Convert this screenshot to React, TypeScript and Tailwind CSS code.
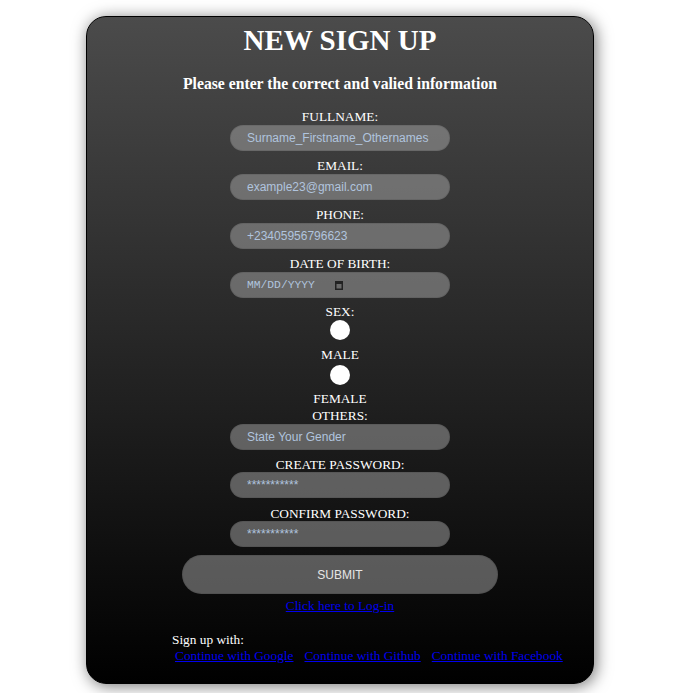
import React from "react";

const inputCls =
  "block w-[220px] h-[26px] rounded-full bg-[rgba(167,167,167,0.5)] border border-[rgba(0,0,0,0.08)] pl-[16px] pr-3 text-[12px] font-['Liberation_Sans',Arial,sans-serif] text-[#b0c4de] placeholder:text-[#b0c4de] outline-none";

function Label({ children, className = "" }: { children: React.ReactNode; className?: string }) {
  return <label className={"block text-[13.33px] leading-[15.5px] text-white text-center " + className}>{children}</label>;
}

function Field({ label, placeholder, type = "text", mt = "mt-[7.5px]" }: { label: string; placeholder: string; type?: string; mt?: string }) {
  return (
    <div className={"flex flex-col items-center " + mt}>
      <Label>{label}</Label>
      <input type={type} placeholder={placeholder} className={inputCls} />
    </div>
  );
}

export default function App() {
  return (
    <div className="w-[700px] h-[693px] bg-white overflow-hidden font-['Liberation_Serif','Times_New_Roman',serif]">
      <div className="ml-[86px] mt-[16px] w-[508px] h-[668px] rounded-[20px] border border-black bg-[linear-gradient(#4b4b4b,#000)] shadow-[2px_2px_16px_rgba(0,0,0,0.55)] flex flex-col items-center">
        <h1 className="mt-[7px] text-[29px] leading-[33px] font-bold text-white">NEW SIGN UP</h1>
        <h3 className="mt-[18px] text-[15.7px] leading-[18px] font-bold text-white">Please enter the correct and valied information</h3>
        <div className="mt-[16px] flex flex-col items-center">
          <Field mt="mt-0" label="FULLNAME:" placeholder="Surname_Firstname_Othernames" />
          <Field label="EMAIL:" placeholder="example23@gmail.com" type="email" />
          <Field label="PHONE:" placeholder="+23405956796623" type="tel" />
          <div className="mt-[7.5px] flex flex-col items-center">
            <Label>DATE OF BIRTH:</Label>
            <div className="w-[220px] h-[26px] rounded-full bg-[rgba(167,167,167,0.5)] border border-[rgba(0,0,0,0.08)] pl-[16px] pt-[2px] flex items-center">
              <span className="text-[11.3px] font-['Liberation_Mono',monospace] text-[#b0c4de]">MM/DD/YYYY</span>
              <svg width="8" height="10" viewBox="0 0 8 10" className="ml-[20px] -mt-[1px]">
                <rect x="0.75" y="1.75" width="6.5" height="7.5" fill="none" stroke="#222" strokeWidth="1.5" />
                <rect x="0" y="1" width="8" height="3" fill="#222" />
              </svg>
            </div>
          </div>
          <Label className="mt-[6.25px]">SEX:</Label>
          <input type="radio" name="sex" className="mt-[1.2px] appearance-none block w-5 h-5 rounded-full bg-white" />
          <Label className="mt-[6.5px]">MALE</Label>
          <input type="radio" name="sex" className="mt-[2.25px] appearance-none block w-5 h-5 rounded-full bg-white" />
          <Label className="mt-[6.5px]">FEMALE</Label>
          <Label className="mt-[0.9px]">OTHERS:</Label>
          <input type="text" placeholder="State Your Gender" className={"mt-[0.8px] " + inputCls} />
          <Field mt="mt-[7px]" label="CREATE PASSWORD:" placeholder="***********" />
          <Field mt="mt-[7.5px]" label="CONFIRM PASSWORD:" placeholder="***********" />
          <button className="mt-[8px] w-[316px] h-[38.5px] rounded-full bg-[rgba(167,167,167,0.5)] border border-[rgba(0,0,0,0.08)] text-[12px] font-['Liberation_Sans',Arial,sans-serif] text-[#e6e6e6]">
            SUBMIT
          </button>
          <a href="#" className="mt-[4.5px] text-[13.33px] leading-[15.5px] text-[#0000ee] underline">Click here to Log-in</a>
        </div>
        <div className="mt-[18px] w-full pl-[85px] text-[13.33px] leading-[16px]">
          <div className="text-white">Sign up with:</div>
          <div className="flex gap-[11px] pl-[3px]">
            <a href="#" className="text-[#0000ee] underline">Continue with Google</a>
            <a href="#" className="text-[#0000ee] underline">Continue with Github</a>
            <a href="#" className="text-[#0000ee] underline">Continue with Facebook</a>
          </div>
        </div>
      </div>
    </div>
  );
}
